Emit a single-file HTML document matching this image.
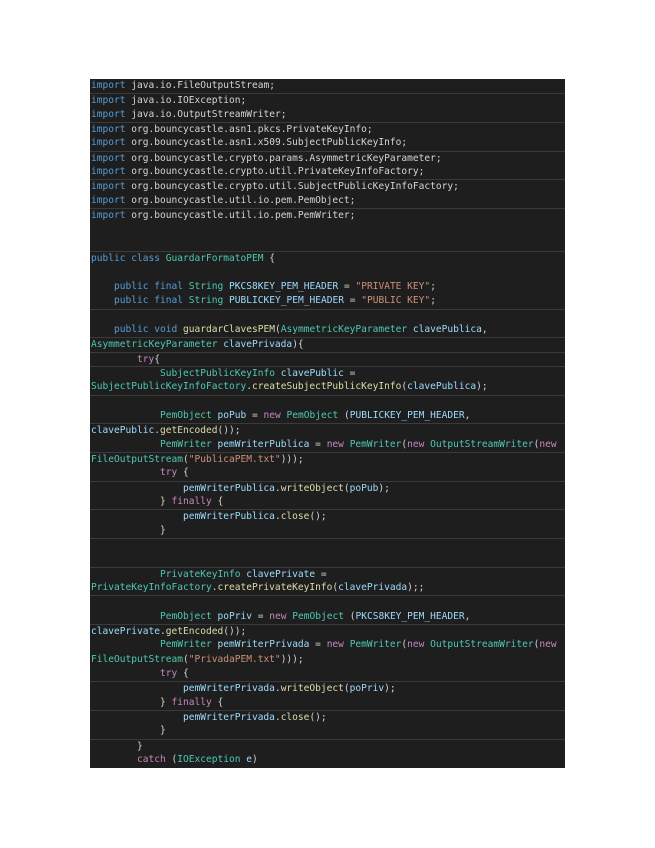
<!DOCTYPE html>
<html><head><meta charset="utf-8"><style>
html,body{margin:0;padding:0;background:#fff;width:655px;height:848px;overflow:hidden}
#c{position:absolute;left:90px;top:79px;width:475px;height:689px;background:#1e1e1e;overflow:hidden}
.l{height:14.35px;line-height:14.35px;font-family:"DejaVu Sans Mono","Liberation Mono",monospace;font-size:9.55px;color:#d4d4d4;white-space:pre;padding-left:1px;box-sizing:border-box}
.s{border-top:1px solid #3a3a3a}
.k{color:#569cd6}.t{color:#4ec9b0}.st{color:#ce9178}.f{color:#dcdcaa}.v{color:#9cdcfe}.p{color:#c586c0}
</style></head><body><div id="c">
<div class="l"><span class="k">import</span> java.io.FileOutputStream;</div>
<div class="l s"><span class="k">import</span> java.io.IOException;</div>
<div class="l"><span class="k">import</span> java.io.OutputStreamWriter;</div>
<div class="l s"><span class="k">import</span> org.bouncycastle.asn1.pkcs.PrivateKeyInfo;</div>
<div class="l"><span class="k">import</span> org.bouncycastle.asn1.x509.SubjectPublicKeyInfo;</div>
<div class="l s"><span class="k">import</span> org.bouncycastle.crypto.params.AsymmetricKeyParameter;</div>
<div class="l"><span class="k">import</span> org.bouncycastle.crypto.util.PrivateKeyInfoFactory;</div>
<div class="l s"><span class="k">import</span> org.bouncycastle.crypto.util.SubjectPublicKeyInfoFactory;</div>
<div class="l"><span class="k">import</span> org.bouncycastle.util.io.pem.PemObject;</div>
<div class="l s"><span class="k">import</span> org.bouncycastle.util.io.pem.PemWriter;</div>
<div class="l"> </div>
<div class="l"> </div>
<div class="l s"><span class="k">public class</span> <span class="t">GuardarFormatoPEM</span> {</div>
<div class="l"> </div>
<div class="l">    <span class="k">public final</span> <span class="t">String</span> <span class="v">PKCS8KEY_PEM_HEADER</span> = <span class="st">"PRIVATE KEY"</span>;</div>
<div class="l">    <span class="k">public final</span> <span class="t">String</span> <span class="v">PUBLICKEY_PEM_HEADER</span> = <span class="st">"PUBLIC KEY"</span>;</div>
<div class="l s"> </div>
<div class="l">    <span class="k">public void</span> <span class="f">guardarClavesPEM</span>(<span class="t">AsymmetricKeyParameter</span> <span class="v">clavePublica</span>,</div>
<div class="l s"><span class="t">AsymmetricKeyParameter</span> <span class="v">clavePrivada</span>){</div>
<div class="l s">        <span class="p">try</span>{</div>
<div class="l s">            <span class="t">SubjectPublicKeyInfo</span> <span class="v">clavePublic</span> =</div>
<div class="l"><span class="t">SubjectPublicKeyInfoFactory</span>.<span class="f">createSubjectPublicKeyInfo</span>(<span class="v">clavePublica</span>);</div>
<div class="l s"> </div>
<div class="l">            <span class="t">PemObject</span> <span class="v">poPub</span> = <span class="p">new</span> <span class="t">PemObject</span> (<span class="v">PUBLICKEY_PEM_HEADER</span>,</div>
<div class="l s"><span class="v">clavePublic</span>.<span class="f">getEncoded</span>());</div>
<div class="l">            <span class="t">PemWriter</span> <span class="v">pemWriterPublica</span> = <span class="p">new</span> <span class="t">PemWriter</span>(<span class="p">new</span> <span class="t">OutputStreamWriter</span>(<span class="p">new</span></div>
<div class="l s"><span class="t">FileOutputStream</span>(<span class="st">"PublicaPEM.txt"</span>)));</div>
<div class="l">            <span class="p">try</span> {</div>
<div class="l s">                <span class="v">pemWriterPublica</span>.<span class="f">writeObject</span>(<span class="v">poPub</span>);</div>
<div class="l">            } <span class="p">finally</span> {</div>
<div class="l s">                <span class="v">pemWriterPublica</span>.<span class="f">close</span>();</div>
<div class="l">            }</div>
<div class="l s"> </div>
<div class="l"> </div>
<div class="l s">            <span class="t">PrivateKeyInfo</span> <span class="v">clavePrivate</span> =</div>
<div class="l"><span class="t">PrivateKeyInfoFactory</span>.<span class="f">createPrivateKeyInfo</span>(<span class="v">clavePrivada</span>);;</div>
<div class="l s"> </div>
<div class="l">            <span class="t">PemObject</span> <span class="v">poPriv</span> = <span class="p">new</span> <span class="t">PemObject</span> (<span class="v">PKCS8KEY_PEM_HEADER</span>,</div>
<div class="l s"><span class="v">clavePrivate</span>.<span class="f">getEncoded</span>());</div>
<div class="l">            <span class="t">PemWriter</span> <span class="v">pemWriterPrivada</span> = <span class="p">new</span> <span class="t">PemWriter</span>(<span class="p">new</span> <span class="t">OutputStreamWriter</span>(<span class="p">new</span></div>
<div class="l"><span class="t">FileOutputStream</span>(<span class="st">"PrivadaPEM.txt"</span>)));</div>
<div class="l">            <span class="p">try</span> {</div>
<div class="l s">                <span class="v">pemWriterPrivada</span>.<span class="f">writeObject</span>(<span class="v">poPriv</span>);</div>
<div class="l">            } <span class="p">finally</span> {</div>
<div class="l s">                <span class="v">pemWriterPrivada</span>.<span class="f">close</span>();</div>
<div class="l">            }</div>
<div class="l s">        }</div>
<div class="l">        <span class="p">catch</span> (<span class="t">IOException</span> <span class="v">e</span>)</div>
</div></body></html>
